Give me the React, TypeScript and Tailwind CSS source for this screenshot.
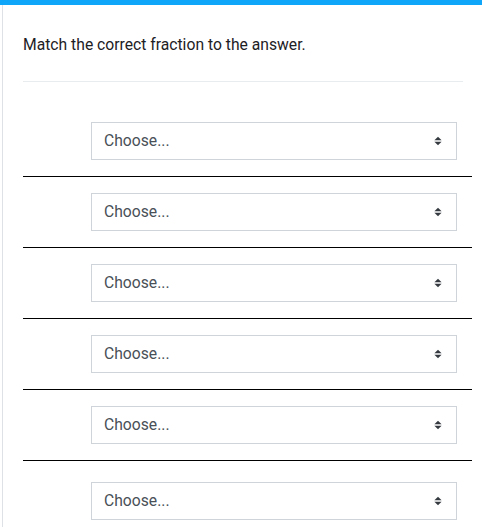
function SortArrows() {
  return (
    <svg width="8" height="10" viewBox="0 0 8 10" className="text-[#343a40]">
      <path d="M4 0.8 L7.6 4.3 L0.4 4.3 Z" fill="currentColor" />
      <path d="M4 9.2 L7.6 5.7 L0.4 5.7 Z" fill="currentColor" />
    </svg>
  );
}

function ChooseSelect() {
  return (
    <div className="ml-[68px] mr-[15px] flex h-[38px] items-center justify-between border border-[#ced4da] bg-white pl-[12px] pr-[14px]">
      <span className="text-[15.7px] text-[#495057]">Choose...</span>
      <SortArrows />
    </div>
  );
}

export default function App() {
  const rows = [0, 1, 2, 3, 4, 5];
  return (
    <div className="min-h-[527px] bg-white font-['Roboto',sans-serif]">
      <div className="h-[5px] bg-[#0fa6fa]" />
      <div className="ml-[2px] min-h-[522px] border-l border-[#dee2e6] pl-[20px] pr-[10px] pt-[29px]">
        <p className="text-[15.7px] leading-[22px] text-[#1d2125]">
          Match the correct fraction to the answer.
        </p>
        <div className="mr-[9px] mt-[25px] h-px bg-[#e9ecef]" />
        <div className="mt-[40px] flex flex-col">
          {rows.map((r) => (
            <div key={r} className="flex flex-col">
              <ChooseSelect />
              {r < rows.length - 1 && (
                <div className={r === rows.length - 2 ? "mt-[16px] mb-[21px] h-px bg-black" : "my-[16px] h-px bg-black"} />
              )}
            </div>
          ))}
        </div>
      </div>
    </div>
  );
}
